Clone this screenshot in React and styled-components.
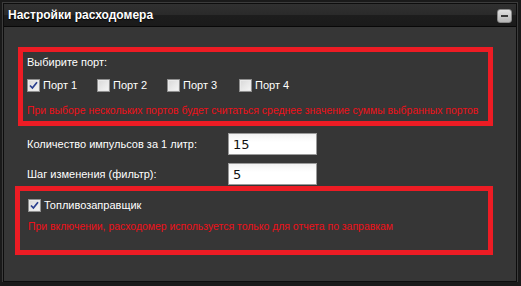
import React from "react";
import styled, { createGlobalStyle } from "styled-components";

const GlobalStyle = createGlobalStyle`
  html, body {
    margin: 0;
    padding: 0;
    background: #1a1a1a;
  }
  body {
    font-family: "Liberation Sans", Arial, sans-serif;
    font-size: 11px;
    color: #fff;
  }
`;

const Panel = styled.div`
  margin: 3px 0 0 3px;
  width: 514px;
  border: 1px solid #0d0d0d;
  box-sizing: border-box;
  box-shadow: 0 0 0 1px #3c3c3c;
`;

const Header = styled.div`
  height: 22px;
  display: flex;
  align-items: center;
  justify-content: space-between;
  padding: 0 4px 0 4px;
  background: linear-gradient(to bottom, #303030 0%, #2a2a2a 48%, #1d1d1d 52%, #1a1a1a 100%);
  border-bottom: 1px solid #080808;
`;

const Title = styled.span`
  font-weight: bold;
  font-size: 12px;
  color: #fff;
  text-shadow: 0 1px 1px #000;
`;

const MinButton = styled.button`
  width: 15px;
  height: 14px;
  padding: 0;
  border: 1px solid #8a8a8a;
  border-radius: 3px;
  background: linear-gradient(to bottom, #e2e2e2, #b6b6b6);
  display: flex;
  align-items: center;
  justify-content: center;
  margin-top: 1px;
  &::after {
    content: "";
    width: 7px;
    height: 2px;
    background: #3a3a3a;
  }
`;

const Body = styled.div`
  background: #363636;
  height: 254px;
  box-sizing: border-box;
  padding-top: 20px;
  display: flex;
  flex-direction: column;
`;

const RedFrame = styled.div`
  box-sizing: border-box;
  border: 5px solid #ed1c24;
  margin-left: ${(p) => p.$left}px;
  margin-top: ${(p) => p.$top || 0}px;
  width: ${(p) => p.$width}px;
  height: ${(p) => p.$height}px;
  padding: ${(p) => p.$pad};
  display: flex;
  flex-direction: column;
`;

const Line = styled.div`
  height: 14px;
  line-height: 14px;
  display: flex;
  align-items: center;
  margin-top: ${(p) => p.$gap || 0}px;
  white-space: nowrap;
`;

const Note = styled(Line)`
  color: #ee1019;
  font-size: 10.45px;
`;

const Ports = styled.div`
  display: grid;
  grid-template-columns: 70px 70px 72px auto;
  height: 14px;
  margin-top: 9px;
`;

const CheckLabel = styled.label`
  display: flex;
  align-items: center;
  gap: 3px;
  white-space: nowrap;
  line-height: 14px;
`;

const Box = styled.span`
  width: 13px;
  height: 13px;
  box-sizing: border-box;
  border: 1px solid #8f8f8f;
  background: linear-gradient(135deg, #d8d8d8 0%, #f6f6f6 100%);
  box-shadow: inset 0 0 0 1px #e9e9e9;
  display: flex;
  align-items: center;
  justify-content: center;
  flex-shrink: 0;
`;

const Check = ({ on }) => (
  <Box>
    {on && (
      <svg width="9" height="9" viewBox="0 0 9 9">
        <path d="M1 4.5 L3.4 7 L8 1.2" fill="none" stroke="#2a3f8f" strokeWidth="1.7" />
      </svg>
    )}
  </Box>
);

const Field = styled.div`
  display: grid;
  grid-template-columns: 201px 89px;
  align-items: center;
  padding-left: 23px;
  margin-top: ${(p) => p.$gap}px;
  height: 22px;
`;

const Input = styled.input`
  box-sizing: border-box;
  width: 89px;
  height: 22px;
  border: 1px solid #9a9a9a;
  background: linear-gradient(to bottom, #f2f2f2, #ffffff 40%);
  padding: 0 4px;
  font-family: "DejaVu Sans", Verdana, sans-serif;
  font-size: 13px;
  color: #111;
  outline: none;
`;

const ports = ["Порт 1", "Порт 2", "Порт 3", "Порт 4"];

export default function App() {
  return (
    <>
      <GlobalStyle />
      <Panel>
        <Header>
          <Title>Настройки расходомера</Title>
          <MinButton aria-label="Свернуть" />
        </Header>
        <Body>
          <RedFrame $left={14} $width={475} $height={79} $pad="3px 0 3px 4px">
            <Line>Выбирите порт:</Line>
            <Ports>
              {ports.map((p, i) => (
                <CheckLabel key={p}>
                  <Check on={i === 0} />
                  {p}
                </CheckLabel>
              ))}
            </Ports>
            <Note $gap={12}>
              При выборе нескольких портов будет считаться среднее значение суммы выбранных портов
            </Note>
          </RedFrame>
          <Field $gap={7}>
            <span>Количество импульсов за 1 литр:</span>
            <Input defaultValue="15" />
          </Field>
          <Field $gap={8}>
            <span>Шаг изменения (фильтр):</span>
            <Input defaultValue="5" />
          </Field>
          <RedFrame $left={11} $top={1} $width={478} $height={69} $pad="7px 0 0 8px">
            <CheckLabel>
              <Check on />
              Топливозаправщик
            </CheckLabel>
            <Note $gap={8}>
              При включении, расходомер используется только для отчета по заправкам
            </Note>
          </RedFrame>
        </Body>
      </Panel>
    </>
  );
}
